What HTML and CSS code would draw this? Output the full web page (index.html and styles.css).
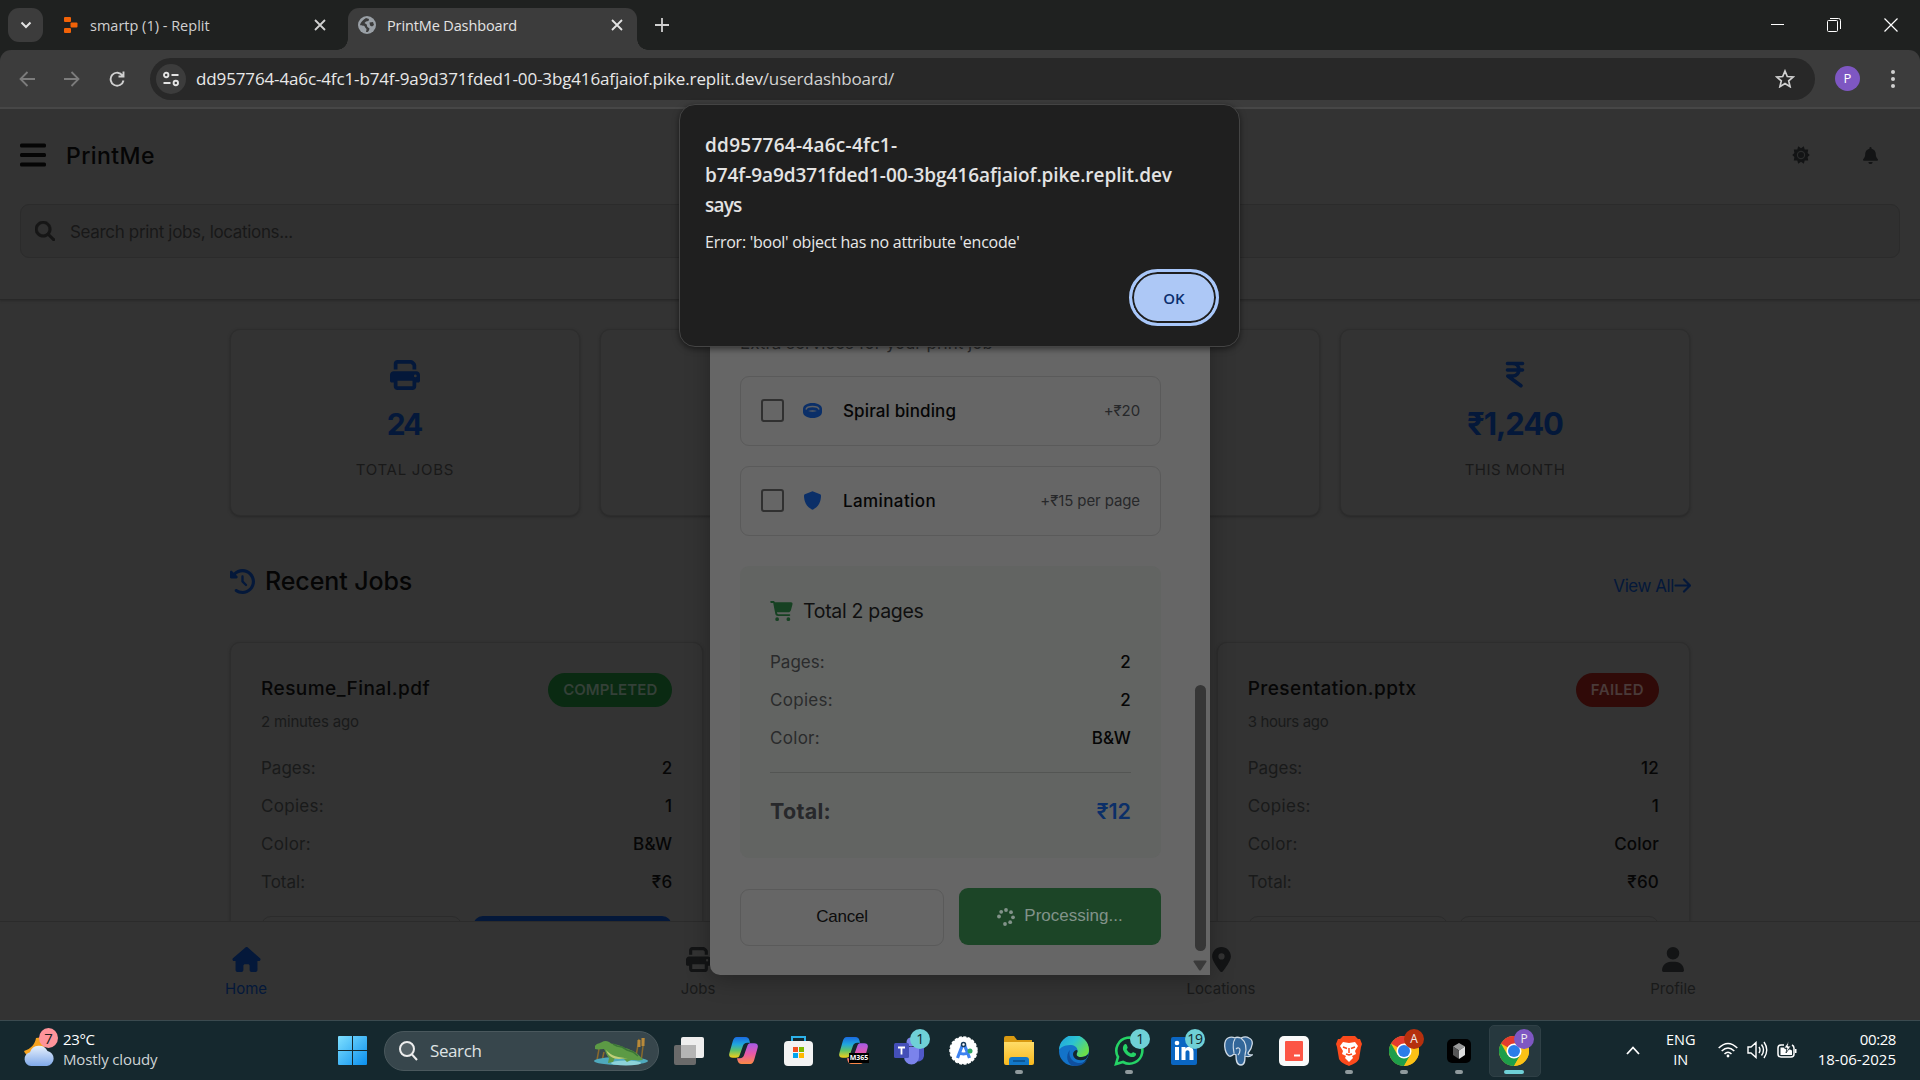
FILE: index.html
```html
<!DOCTYPE html>
<html lang="en">
<head>
<meta charset="utf-8">
<title>PrintMe Dashboard</title>
<link rel="stylesheet" href="styles.css">
</head>
<body>
<svg class="defs" width="0" height="0" aria-hidden="true">
  <defs>
    <symbol id="printer" viewBox="0 0 512 512"><path d="M128 0C92.7 0 64 28.7 64 64v96h64V64H354.7L384 93.3V160h64V93.3c0-17-6.7-33.3-18.7-45.3L400 18.7C388 6.7 371.7 0 354.7 0H128zM384 352v32 64H128V384 368 352H384zm64 32h32c17.7 0 32-14.3 32-32V256c0-35.3-28.7-64-64-64H64c-35.3 0-64 28.7-64 64v96c0 17.7 14.3 32 32 32H64v64c0 35.3 28.7 64 64 64H384c35.3 0 64-28.7 64-64V384zM432 248a24 24 0 1 1 0 48 24 24 0 1 1 0-48z"/></symbol>
    <symbol id="close" viewBox="0 0 12 12"><path d="M1 1L11 11M11 1L1 11" fill="none" stroke="currentColor" stroke-width="1.8"/></symbol>
    <symbol id="chrome" viewBox="0 0 30 30">
      <circle cx="15" cy="15" r="15" fill="#fbc116"/>
      <path d="M15 15L2 7.5A15 15 0 0 1 28 7.5H15z" fill="#e33b2e"/>
      <path d="M2 7.5A15 15 0 0 0 15 30L21.5 18.8L8.5 18.8z" fill="#1e9e4a"/>
      <path d="M28 7.500H15V15L21.500 18.800L15 30A15 15 0 0 0 28 7.500z" fill="#fbc116"/>
      <circle cx="15" cy="15" r="7.500" fill="#fff"/><circle cx="15" cy="15" r="6" fill="#2b7de9"/>
    </symbol>
    <linearGradient id="cpA" x1="0" y1="0" x2="0" y2="1"><stop offset="0" stop-color="#1b6be0"/><stop offset=".35" stop-color="#1fa5e0"/><stop offset=".65" stop-color="#5fc36a"/><stop offset="1" stop-color="#f5d018"/></linearGradient>
    <linearGradient id="cpB" x1="0" y1="0" x2="0" y2="1"><stop offset="0" stop-color="#a55be8"/><stop offset=".5" stop-color="#e858a8"/><stop offset="1" stop-color="#fb8a44"/></linearGradient>
    <symbol id="copilot" viewBox="0 0 30 28">
      <path d="M8 0h9c2.500 0 3.500 1.500 4 3l.8 3h-3c-2.500 0-3.800 1.300-4.500 3.500L11 19c-.7 2-1.800 2.500-4 2.500H4c-3.500 0-4.500-2-3.600-5L4 4C4.800 1.500 6 0 8 0z" fill="url(#cpA)"/>
      <path d="M22 28h-9c-2.500 0-3.500-1.500-4-3l-.8-3h3c2.500 0 3.800-1.300 4.500-3.500L19 9c.7-2 1.800-2.500 4-2.500h3c3.500 0 4.500 2 3.600 5L26 24c-.8 2.500-2 4-4 4z" fill="url(#cpB)"/>
    </symbol>
    <linearGradient id="win" x1="0" y1="0" x2="1" y2="1"><stop offset="0" stop-color="#7fe0ff"/><stop offset="1" stop-color="#0a8fee"/></linearGradient>
    <linearGradient id="cloud" x1="0" y1="0" x2="0" y2="1"><stop offset="0" stop-color="#e8f1fc"/><stop offset="1" stop-color="#7fa9ea"/></linearGradient>
    <linearGradient id="edge" x1="0" y1="0" x2="1" y2=".6"><stop offset="0" stop-color="#1f9fe0"/><stop offset=".5" stop-color="#2cc3d2"/><stop offset="1" stop-color="#6be04a"/></linearGradient>
    <linearGradient id="folder" x1="0" y1="0" x2="0" y2="1"><stop offset="0" stop-color="#ffdc68"/><stop offset="1" stop-color="#f9b91d"/></linearGradient>
  </defs>
</svg>

<div class="tabstrip">
  <button class="tab-search"><svg width="12" height="8" viewBox="0 0 12 8"><path d="M1.500 1.500L6 6l4.500-4.500" fill="none" stroke="#e3e3e3" stroke-width="2"/></svg></button>
  <div class="tab">
    <svg class="fav" width="14" height="16" viewBox="0 0 14 16" fill="#f26207"><rect width="7" height="5" rx="1"/><rect x="6.500" y="5.500" width="7" height="5" rx="1"/><rect y="11" width="7" height="5" rx="1"/></svg>
    <span>smartp (1) - Replit</span>
    <svg class="x" width="12" height="12"><use href="#close"/></svg>
  </div>
  <div class="tab active">
    <svg class="fav" width="18" height="18" viewBox="0 0 18 18"><circle cx="9" cy="9" r="9" fill="#9aa0a6"/><path d="M8 2C5 4 2.500 6 2 9c1.500 1 4.500 0 5 2 .3 1.500 1.500 1.200 1.500 2.500L8 16c3 .5 3-2 3.500-3.500l-2-1.500c-1-1 0-2.500-1.500-3L6.500 7 8 5.500 10.500 5 11 3z" fill="#3c3c3c"/><path d="M11.500 6.500L15 6l1 3-2 1.500-2-1z" fill="#3c3c3c"/></svg>
    <span>PrintMe Dashboard</span>
    <svg class="x" width="12" height="12"><use href="#close"/></svg>
  </div>
  <svg class="plus" width="14" height="14" viewBox="0 0 14 14"><path d="M7 0v14M0 7h14" stroke="#d0d0d0" stroke-width="1.800"/></svg>
  <div class="winctl">
    <svg width="13" height="14" viewBox="0 0 13 14"><path d="M0 6.500h13" stroke="#fff"/></svg>
    <svg width="14" height="14" viewBox="0 0 14 14" fill="none" stroke="#fff"><rect x=".5" y="2.500" width="10" height="11" rx="1"/><path d="M3 .5h8.500a2 2 0 0 1 2 2V11"/></svg>
    <svg width="14" height="14" viewBox="0 0 14 14"><path d="M.5.5l13 13m0-13l-13 13" stroke="#fff" stroke-width="1.200"/></svg>
  </div>
</div>

<div class="toolbar-wrap"><div class="toolbar">
  <svg width="16" height="16" viewBox="0 0 16 16" fill="none" stroke="#7c7c7c" stroke-width="1.800"><path d="M16 8H1.500M8.500 1L1.500 8l7 7"/></svg>
  <svg class="fwd" width="16" height="16" viewBox="0 0 16 16" fill="none" stroke="#7c7c7c" stroke-width="1.800"><path d="M0 8h14.500M7.500 1l7 7-7 7"/></svg>
  <svg class="reload" width="16" height="16" viewBox="0 0 16 16" fill="none" stroke="#d0d0d0" stroke-width="1.900"><path d="M13.500 4.500A6.500 6.500 0 1 0 14.500 9.500M14.500 .5V5.500H9.500"/></svg>
  <div class="omnibox">
    <span class="site"><svg width="16" height="16" viewBox="0 0 16 16" fill="none" stroke="#e3e3e3" stroke-width="1.900"><circle cx="3.200" cy="4" r="2.200"/><path d="M8.500 4H15.500M.5 12H7.500"/><circle cx="12.800" cy="12" r="2.200"/></svg></span>
    <span class="url">dd957764-4a6c-4fc1-b74f-9a9d371fded1-00-3bg416afjaiof.pike.replit.dev<span class="path">/userdashboard/</span></span>
    <svg class="star" width="20" height="19" viewBox="0 0 20 19"><path d="M10 2l2.300 5.500 5.900.5-4.500 3.900 1.400 5.800L10 14.600l-5.100 3.100 1.400-5.800L1.800 8l5.900-.5z" fill="none" stroke="#d0d0d0" stroke-width="1.700"/></svg>
  </div>
  <span class="avatar">P</span>
  <svg class="kebab" width="4" height="18" viewBox="0 0 4 18" fill="#d0d0d0"><circle cx="2" cy="2" r="2"/><circle cx="2" cy="9" r="2"/><circle cx="2" cy="16" r="2"/></svg>
</div></div>

<div class="page">
  <header class="head">
    <div class="head-row">
      <svg width="26" height="24" viewBox="0 0 26 24" fill="#050505"><rect y=".5" width="26" height="4" rx="1.500"/><rect y="10" width="26" height="4" rx="1.500"/><rect y="19.500" width="26" height="4" rx="1.500"/></svg>
      <h1>PrintMe</h1>
      <svg class="sun" width="18" height="18" viewBox="0 0 18 18"><path d="M9 2.200L11.800 .2l.9 3.300 3.500.1-.6 3.300L17.800 9l-2.200 2.100.6 3.300-3.500.1-.9 3.300L9 15.800l-2.800 2-.9-3.300-3.500-.1.600-3.300L.2 9l2.200-2.100-.6-3.300 3.500-.1.900-3.300z" fill="#131415"/><circle cx="9" cy="9" r="3.600" fill="none" stroke="#2b2c2c" stroke-width="1.200"/></svg>
      <svg class="bell" width="15" height="17" viewBox="0 0 448 512" fill="#131415"><path d="M224 0c-17.700 0-32 14.300-32 32V51.200C119 66 64 130.600 64 208v18.800c0 47-17.300 92.400-48.500 127.600l-7.400 8.300c-8.400 9.400-10.400 22.900-5.300 34.400S19.400 416 32 416H416c12.600 0 24-7.400 29.200-18.900s3.100-25-5.300-34.400l-7.400-8.300C401.300 319.200 384 273.900 384 226.800V208c0-77.400-55-142-128-156.800V32c0-17.700-14.300-32-32-32zm45.300 493.300c12-12 18.700-28.300 18.700-45.300H224 160c0 17 6.700 33.300 18.700 45.300s28.300 18.700 45.300 18.700s33.300-6.700 45.300-18.700z"/></svg>
    </div>
    <div class="search">
      <svg width="20" height="20" viewBox="0 0 512 512" fill="#161616"><path d="M416 208c0 45.900-14.900 88.300-40 122.700L502.600 457.400c12.500 12.500 12.500 32.800 0 45.300s-32.800 12.500-45.300 0L330.700 376c-34.400 25.200-76.800 40-122.700 40C93.100 416 0 322.900 0 208S93.100 0 208 0S416 93.100 416 208zM208 352a144 144 0 1 0 0-288 144 144 0 1 0 0 288z" stroke="#161616" stroke-width="14"/></svg>
      <span>Search print jobs, locations...</span>
    </div>
  </header>

  <main>
    <section class="stats">
      <div class="stat"><svg width="30" height="30"><use href="#printer"/></svg><b class="n24">24</b><small>TOTAL JOBS</small></div>
      <div class="stat"></div>
      <div class="stat"></div>
      <div class="stat"><svg width="30" height="30" viewBox="0 0 30 30" fill="none" stroke="#04183a" stroke-width="3.600" stroke-linecap="round" stroke-linejoin="round"><path d="M7.500 3.500h15M7.500 10h15M8 3.500h4.500c8.500 0 8.500 12.500 0 12.500H7.800L21 25.800"/></svg><b>₹1,240</b><small class="tm">THIS MONTH</small></div>
    </section>

    <div class="section-head">
      <svg width="25" height="25" viewBox="0 0 512 512" fill="#04183a"><path d="M75 75L41 41C25.900 25.900 0 36.600 0 57.900V168c0 13.300 10.700 24 24 24H134.100c21.400 0 32.100-25.900 17-41l-30.800-30.800C155 85.500 203 64 256 64c106 0 192 86 192 192s-86 192-192 192c-40.800 0-78.600-12.700-109.700-34.400c-14.500-10.100-34.400-6.600-44.600 7.900s-6.600 34.400 7.900 44.600C151.200 495 201.700 512 256 512c141.400 0 256-114.600 256-256S397.400 0 256 0C185.300 0 121.300 28.700 75 75zm181 53c-13.300 0-24 10.700-24 24V256c0 6.400 2.500 12.500 7 17l72 72c9.400 9.400 24.600 9.400 33.900 0s9.400-24.600 0-33.900l-65-65V152c0-13.300-10.700-24-24-24z"/></svg>
      <h2>Recent Jobs</h2>
      <a>View All</a>
      <svg class="arrow" width="17" height="15" viewBox="0 0 17 15" fill="none" stroke="#04183a" stroke-width="2.200" stroke-linecap="round" stroke-linejoin="round"><path d="M1.500 7.500h14M10 1.500l6 6-6 6"/></svg>
    </div>

    <section class="jobs">
      <article class="job">
        <div class="job-top"><h3>Resume_Final.pdf</h3><span class="badge ok">COMPLETED</span></div>
        <p class="ago">2 minutes ago</p>
        <div class="rows">
          <div><span>Pages:</span><b>2</b></div><div><span class="w">Copies:</span><b>1</b></div><div><span class="w">Color:</span><b>B&amp;W</b></div><div><span>Total:</span><b>₹6</b></div>
        </div>
        <div class="job-actions"><i></i><i class="blue"></i></div>
      </article>
      <article class="job"></article>
      <article class="job">
        <div class="job-top"><h3>Presentation.pptx</h3><span class="badge bad">FAILED</span></div>
        <p class="ago hrs">3 hours ago</p>
        <div class="rows">
          <div><span>Pages:</span><b>12</b></div><div><span class="w">Copies:</span><b>1</b></div><div><span class="w">Color:</span><b>Color</b></div><div><span>Total:</span><b>₹60</b></div>
        </div>
        <div class="job-actions"><i></i><i></i></div>
      </article>
    </section>
  </main>

  <nav class="bottom-nav">
    <a class="on"><svg width="29" height="25" viewBox="0 0 576 512"><path d="M575.800 255.500c0 18-15 32.100-32 32.100h-32l.7 160.200c0 2.700-.2 5.400-.5 8.100V472c0 22.100-17.900 40-40 40H456c-1.100 0-2.200 0-3.300-.1c-1.400 .1-2.800 .1-4.200 .1H416 392c-22.100 0-40-17.900-40-40V448 384c0-17.700-14.300-32-32-32H256c-17.700 0-32 14.300-32 32v64 24c0 22.100-17.900 40-40 40H160 128.100c-1.500 0-3-.1-4.500-.2c-1.200 .1-2.400 .2-3.600 .2H104c-22.100 0-40-17.900-40-40V360c0-.9 0-1.900 .1-2.800V287.600H32c-18 0-32-14-32-32.100c0-9 3-17 10-24L266.400 8c7-7 15-8 22-8s15 2 21 7L564.800 231.500c8 7 12 15 11 24z"/></svg><span>Home</span></a>
    <a><svg width="25" height="25"><use href="#printer"/></svg><span>Jobs</span></a>
    <a class="after-gap"><svg width="19" height="25" viewBox="0 0 384 512"><path d="M215.700 499.200C267 435 384 279.400 384 192C384 86 298 0 192 0S0 86 0 192c0 87.400 117 243 168.300 307.200c12.300 15.300 35.100 15.300 47.400 0zM192 128a64 64 0 1 1 0 128 64 64 0 1 1 0-128z"/></svg><span>Locations</span></a>
    <a><svg width="22" height="25" viewBox="0 0 448 512"><path d="M224 256A128 128 0 1 0 224 0a128 128 0 1 0 0 256zm-45.700 48C79.800 304 0 383.800 0 482.300C0 498.700 13.300 512 29.700 512H418.300c16.400 0 29.700-13.300 29.700-29.700C448 383.800 368.200 304 269.700 304H178.300z"/></svg><span>Profile</span></a>
  </nav>

  <div class="modal">
    <p class="sub">Extra services for your print job</p>
    <div class="option">
      <i class="check"></i>
      <svg width="19" height="15" viewBox="0 0 19 15"><path d="M0 6C0 2.500 4 0 9.500 0S19 2.500 19 6v3c0 3.500-4 6-9.500 6S0 12.500 0 9z" fill="#0b2f68"/><path d="M3 6.500C3.500 4.600 6 3.600 9.500 3.600s6 1 6.500 2.900" fill="none" stroke="#5d6064" stroke-width="1.500"/><path d="M5 8q4.500-1.500 9 0-4.500 1.500-9 0z" fill="#5d6064"/></svg>
      <span>Spiral binding</span><em>+₹20</em>
    </div>
    <div class="option">
      <i class="check"></i>
      <svg width="19" height="19" viewBox="0 0 19 19" fill="#0b2f68"><path d="M9.500.3l7.600 3c.6.300.9.700.9 1.300C18 11 15.500 16 9.500 18.700 3.500 16 1 11 1 4.600c0-.6.300-1 .9-1.300z"/></svg>
      <span class="lam">Lamination</span><em>+₹15 per page</em>
    </div>
    <div class="summary">
      <h4><svg width="23" height="20" viewBox="0 0 576 512" fill="#164122"><path d="M0 24C0 10.700 10.700 0 24 0H69.500c22 0 41.500 12.800 50.600 32h411c26.300 0 45.500 25 38.600 50.400l-41 152.300c-8.500 31.400-37 53.300-69.500 53.300H170.700l5.400 28.500c2.200 11.300 12.100 19.500 23.600 19.500H488c13.300 0 24 10.700 24 24s-10.700 24-24 24H199.700c-34.600 0-64.300-24.600-70.700-58.500L77.400 54.500c-.7-3.800-4-6.500-7.900-6.500H24C10.700 48 0 37.300 0 24zM128 464a48 48 0 1 1 96 0 48 48 0 1 1 -96 0zm336-48a48 48 0 1 1 0 96 48 48 0 1 1 0-96z"/></svg><span>Total 2 pages</span></h4>
      <div class="rows">
        <div><span>Pages:</span><b>2</b></div><div><span class="w">Copies:</span><b>2</b></div><div><span class="w">Color:</span><b>B&amp;W</b></div>
      </div>
      <div class="grand"><span>Total:</span><b>₹12</b></div>
    </div>
    <div class="actions">
      <button class="cancel">Cancel</button>
      <button class="go"><svg width="18" height="18" viewBox="0 0 18 18" fill="#82938a"><circle cx="9" cy="2" r="1.900"/><circle cx="14" cy="4.200" r="1.900"/><circle cx="16" cy="9.300" r="1.900"/><circle cx="13.200" cy="14.200" r="1.900"/><circle cx="8" cy="16" r="1.900"/><circle cx="2" cy="8.500" r="1.900"/><circle cx="4.200" cy="3.800" r="1.900"/></svg><span>Processing...</span></button>
    </div>
    <div class="scroll"><i></i><svg width="14" height="11" viewBox="0 0 14 11"><path d="M1.500.5h11c1 0 1.300.8.8 1.500L8 10c-.5.700-1.500.7-2 0L.7 2C.2 1.300.5.500 1.500.5z" fill="#3a3a3a"/></svg></div>
  </div>
</div>

<div class="dialog">
  <h5><span class="l1">dd957764-4a6c-4fc1-</span><br><span class="l2">b74f-9a9d371fded1-00-3bg416afjaiof.pike.replit.dev</span><br><span class="l3">says</span></h5>
  <p>Error: 'bool' object has no attribute 'encode'</p>
  <button>OK</button>
</div>

<footer class="taskbar">
  <div class="weather">
    <span class="wicon"><svg width="34" height="38" viewBox="0 0 34 38"><path d="M12 9c-1 6-5 11-12 13 3 8 14 9 20 4V8z" fill="#f5a21f"/><path d="M7 37a7 7 0 0 1-1-13.800A9.500 9.500 0 0 1 23.500 22 7.600 7.600 0 0 1 23 37z" fill="url(#cloud)"/></svg><i>7</i></span>
    <div><span class="deg">23°C</span><span class="cond">Mostly cloudy</span></div>
  </div>
  <svg class="start" width="29" height="29" viewBox="0 0 29 29" fill="url(#win)"><path d="M0 1q0-1 1-1h13v14H0zM15 0h13q1 0 1 1v13H15zM0 15h14v14H1q-1 0-1-1zM15 15h14v13q0 1-1 1H15z"/></svg>
  <div class="tsearch">
    <svg width="19" height="20" viewBox="0 0 19 20" fill="rgba(255,255,255,.15)" stroke="#eee" stroke-width="2"><circle cx="8" cy="8" r="7"/><path d="M13 13.500l5 5.500"/></svg>
    <span>Search</span>
    <svg class="gator" width="57" height="30" viewBox="0 0 57 30"><path d="M42 26L46 3M48 26l3-24M4 24L6 13M9 25l2-9" stroke="#8a6a2c" stroke-width="1.500"/><path d="M46 4v7M50 2v8" stroke="#b98a3a" stroke-width="3"/><ellipse cx="28" cy="25" rx="27" ry="4" fill="#4fa9bd"/><ellipse cx="33" cy="27" rx="15" ry="2.500" fill="#8dd3da"/><path d="M2 10c2-3 5-2.500 7-4 3-2 7-1 9 1.500 5 1 9 1.500 14 4.500 8 2 14 6 18 12-5 1-9 0-12 0l-4 2-3-3-9-1-2 4-5 1 1-5c-3-3-3-6-5-9-3 0-6 1-9 0z" fill="#5c9a45"/><path d="M13 14c5 6 13 8 22 8l-9 1c-6 0-11-3-13-9z" fill="#c2cf7a"/><path d="M20 8l4 2 5 1 5 3 6 2 5 4" stroke="#3b7537" stroke-width="1.500" fill="none"/></svg>
  </div>
  <div class="apps">
    <span><svg width="30" height="28" viewBox="0 0 30 28"><rect y="8" width="22" height="20" rx="2" fill="#6a6a6a"/><rect x="7" width="23" height="21" rx="2" fill="#eee"/><rect x="7" y="8" width="15" height="13" fill="#b4b4b4"/></svg></span>
    <span><svg width="29" height="27"><use href="#copilot"/></svg></span>
    <span><svg width="29" height="30" viewBox="0 0 29 30"><path d="M8 6V1h13v5" fill="none" stroke="#2cb2ea" stroke-width="2"/><rect y="5" width="29" height="25" rx="4" fill="#f3f3f3"/><path d="M9 11h5v5H9z" fill="#f25022"/><path d="M15 11h5v5h-5z" fill="#7fba00"/><path d="M9 17h5v5H9z" fill="#00a4ef"/><path d="M15 17h5v5h-5z" fill="#ffb900"/></svg></span>
    <span><svg width="29" height="27"><use href="#copilot"/></svg><i class="m365">M365</i></span>
    <span><svg width="30" height="28" viewBox="0 0 30 28"><circle cx="17" cy="5" r="4.500" fill="#7b83eb"/><path d="M20 9h10v10a6 6 0 0 1-8 5z" fill="#5059c9"/><path d="M10 10h15v10a7.500 7.500 0 0 1-15 0z" fill="#7b83eb"/><rect y="6" width="15" height="15" rx="1.500" fill="#444fb8"/><path d="M4 10.500h7M7.500 10.500v7" stroke="#fff" stroke-width="1.800"/></svg><i class="count">1</i></span>
    <span><svg width="29" height="29" viewBox="0 0 29 29"><circle cx="14.500" cy="14.500" r="13.500" fill="#fff" stroke="#fff" stroke-width="1.500" stroke-dasharray="3 1.500"/><path d="M13.500 9L8.500 22M15.500 9l5 13M9.500 16.500q5 3 10 0" fill="none" stroke="#3d82f0" stroke-width="3.200"/><circle cx="21" cy="15" r="2.500" fill="#2da562"/><circle cx="14.500" cy="8.500" r="2" fill="#fff" stroke="#173a5c" stroke-width="1.500"/></svg></span>
    <span class="run"><svg width="30" height="29" viewBox="0 0 30 29"><path d="M0 2q0-2 2-2h8l3 4h15v8H0z" fill="#d99a11"/><path d="M0 6h30v21q0 2-2 2H2q-2 0-2-2z" fill="url(#folder)"/><path d="M5 29v-5q0-3 3-3h14q3 0 3 3v5z" fill="#1278c8"/><path d="M9 25h12" stroke="#0b4c86" stroke-width="1.500"/></svg></span>
    <span><svg width="30" height="30" viewBox="0 0 30 30"><circle cx="15" cy="15" r="15" fill="#1373c9"/><path d="M0 14A15 15 0 0 1 30 14c0 5-4 7-8 7-4 0-5-2-4-4 2-5-2-8-7-8C5 9 1 12 0 14z" fill="url(#edge)"/><path d="M11 14c-2 5 1 12 8 13 4 .5 7-1 9-3-3 5-8 6-13 6C8 29 6 19 11 14z" fill="#0f4f9e"/><path d="M18 17c-1 2 0 4 4 4 3 0 6-1 7.600-3.500-.5 2.500-1.500 4-2.600 5.500-7 3-13 0-13-5 0-2 2-4 4-4 1 1 .5 2 0 3z" fill="#15272d"/></svg></span>
    <span class="run"><svg width="30" height="30" viewBox="0 0 30 30"><path d="M2 28l2-7a13 13 0 1 1 5 5z" fill="#15272d" stroke="#25d366" stroke-width="2.600"/><path d="M10 9c1-1.500 2.500-1 3 .5l.7 2c0 1-1 1.300-1 2 1 2 2.300 3 4.300 4 1 0 1.300-1.500 2.500-1.200l2.500 1.200c.5 3-3 4-5 3.500C13 20 10 16.500 9 13.500 8.800 11.500 9 10 10 9z" fill="#25d366"/></svg><i class="count">1</i></span>
    <span><svg width="26" height="29" viewBox="0 0 26 29"><rect y="1" width="26" height="28" rx="2" fill="#0a66c2"/><path d="M4 11h4v13H4zM10.500 11h4v1.700c1.200-3 8-3 8 3V24h-4v-7.500c0-3-4-3-4 0V24h-4z" fill="#fff"/><circle cx="6" cy="7" r="2.300" fill="#fff"/></svg><i class="count">19</i></span>
    <span><svg width="29" height="30" viewBox="0 0 29 30"><path d="M4 2C-1 5 0 16 5 20c2 1 4-1 5-2l2 1c0 4 0 10 5 10 4 0 4-5 4-9 3 1 6 0 7-1-3 0-4-1-4-2C29 11 30 4 25 2c-3-2-6-1-8 0-3-1-5-1-6 0C9 1 6 1 4 2z" fill="#33679a" stroke="#cfdbe6" stroke-width="1.300"/><path d="M11 3c-3 4-2 9-1 14M17 2c5 4 6 10 4 17M12 13c2-2 4-1 4 1s-1 4-2 5" fill="none" stroke="#cfdbe6" stroke-width="1.200"/></svg></span>
    <span><svg width="30" height="30" viewBox="0 0 30 30"><rect width="30" height="30" rx="5" fill="#fafafa"/><rect x="6" y="5" width="18" height="20" rx="1" fill="#fc5545"/><path d="M15 19.500h6" stroke="#fff" stroke-width="2"/></svg></span>
    <span class="run"><svg width="26" height="30" viewBox="0 0 26 30"><path d="M7 0h12l3 3 2 0 2 5-1 3-2 12c-2 4-6 5-10 7C9 28 5 27 3 23L1 11 0 8l2-5h2z" fill="#fb4a1c"/><path d="M7 6l6 1 6-1 3 4-3 5 1 3-4 2 1 2-4 4-4-4 1-2-4-2 1-3-3-5z" fill="#fff"/><path d="M7 11l4 1.500M19 11l-4 1.500M10 18l3 1 3-1M13 12v5" stroke="#fb4a1c" stroke-width="1.500"/></svg></span>
    <span class="run"><svg width="30" height="30"><use href="#chrome"/></svg><i class="who a">A</i></span>
    <span class="run"><svg width="24" height="24" viewBox="0 0 24 24"><rect width="24" height="24" rx="5" fill="#000"/><path d="M12 4l6 3.500-6 4-6-4z" fill="#999"/><path d="M6 7.500l6 4V20l-6-4z" fill="#555"/><path d="M18 7.500l-6 4V20l6-4z" fill="#ddd"/></svg></span>
    <span class="run cur"><svg width="30" height="30"><use href="#chrome"/></svg><i class="who p">P</i></span>
  </div>
  <div class="tray">
    <svg class="up" width="14" height="9" viewBox="0 0 14 9"><path d="M1 8l6-6.500L13 8" fill="none" stroke="#fff" stroke-width="1.800"/></svg>
    <div class="lang"><span>ENG</span><span class="in">IN</span></div>
    <svg class="wifi" width="20" height="16" viewBox="0 0 20 16" fill="none" stroke="#fff" stroke-width="1.500"><path d="M.7 6Q10-3 19.300 6M3.700 9q6.300-6 12.600 0M6.500 12q3.500-3.500 7 0"/><circle cx="10" cy="14" r="1.400" fill="#fff" stroke="none"/></svg>
    <svg class="vol" width="21" height="18" viewBox="0 0 21 18" fill="none" stroke="#fff" stroke-width="1.400"><path d="M1 6v6h3l5 4.500v-15L4 6zM12 6q2 3 0 6M14.500 3.500q4 5.500 0 11M17 1q5.500 8 0 16"/></svg>
    <svg class="bat" width="20" height="18" viewBox="0 0 20 18"><path d="M7 4H4Q1 4 1 7v6q0 3 3 3h10q3 0 3-3V7q0-2-2-3" fill="none" stroke="#fff" stroke-width="1.500"/><path d="M18 8v4h1.500V8z" fill="#fff"/><path d="M3.500 6.500H7l2 2 4 0 2 1v4.500H3.500z" fill="#fff"/><path d="M12 0L7 7h3l-1 5 5-7h-3z" fill="#fff" stroke="#15272d" stroke-width=".8"/></svg>
    <div class="clock"><span class="hm">00:28</span><span>18-06-2025</span></div>
  </div>
</footer>
</body>
</html>
```
FILE: styles.css
```css
* { box-sizing: border-box; }
body, h1, h2, h3, h4, h5, p { margin: 0; font-weight: inherit; }
body {
  width: 1920px; height: 1080px; overflow: hidden; position: relative;
  display: flex; flex-direction: column;
  background: #333; color: #e3e3e3;
  font-family: "Open Sans", "Noto Sans", sans-serif;
}
svg { display: block; flex: none; }
i, em { font-style: normal; }
button { border: 0; padding: 0; font: inherit; color: inherit; }
.defs { position: absolute; }

/* browser chrome */
.tabstrip { height: 50px; background: #1f2120; display: flex; align-items: center; flex: none; font-size: 14.5px; }
.tab-search { width: 35px; height: 34px; margin-left: 8px; border-radius: 11px; background: #3c3c3c; display: flex; align-items: center; justify-content: center; }
.tab { display: flex; align-items: center; width: 290px; height: 42px; margin-top: 8px; padding: 0 7px 8px 21px; color: #d0d0d0; }
.tab span { flex: 1; }
.tab .fav { margin-right: 12px; }
.tab.active { width: 289px; margin-left: 15px; padding: 0 14px 8px 10px; background: #3c3c3c; border-radius: 11px 11px 0 0; color: #e3e3e3; letter-spacing: -.13px; position: relative; }
.tab.active .fav { margin-right: 11px; }
.tab.active::before, .tab.active::after { content: ""; position: absolute; bottom: 0; width: 11px; height: 11px; }
.tab.active::before { left: -11px; background: radial-gradient(circle at 0 0, transparent 10.5px, #3c3c3c 11px); }
.tab.active::after { right: -11px; background: radial-gradient(circle at 100% 0, transparent 10.5px, #3c3c3c 11px); }
.plus { margin-left: 18px; }
.winctl { margin-left: auto; margin-right: 22px; display: flex; gap: 43px; align-items: center; }
.toolbar-wrap { background: #1f2120; flex: none; }
.toolbar { height: 59px; background: #3c3c3c; border-bottom: 2px solid #474747; border-radius: 11px 11px 0 0; display: flex; align-items: center; padding-left: 19px; }
.fwd { margin-left: 29px; }
.reload { margin-left: 29px; }
.omnibox { width: 1665px; height: 42px; margin-left: 25px; border-radius: 21px; background: #282828; display: flex; align-items: center; padding: 0 20px 0 6px; font-size: 17px; letter-spacing: -.13px; }
.site { width: 30px; height: 30px; border-radius: 50%; background: #3c3c3c; display: flex; align-items: center; justify-content: center; margin-right: 10px; }
.url { flex: 1; color: #e8e8e8; }
.path { color: #d2d2d2; }
.avatar { width: 25px; height: 25px; border-radius: 50%; background: #7e57c2; color: #fff; font-size: 13px; line-height: 25px; text-align: center; margin-left: 20px; }
.kebab { margin-left: 31px; }

/* dashboard */
.page { height: 911px; position: relative; overflow: hidden; flex: none; background: #333; font-family: Inter, "Noto Sans", sans-serif; color: #050505; }
.head { height: 191px; padding: 16px 20px 0; border-bottom: 1px solid #282828; box-shadow: 0 1px 2px #2a2a2a; }
.head-row { height: 60px; display: flex; align-items: center; }
.head h1 { font-size: 23px; line-height: 30px; padding-top: 1px; font-weight: 500; letter-spacing: .43px; margin-left: 20px; flex: 1; }
.sun { margin-right: 53px; }
.bell { margin-right: 22px; }
.search { margin-top: 19px; height: 54px; border: 1px solid #2b2b2b; border-radius: 9px; background: #303030; display: flex; align-items: center; padding-left: 14px; font-size: 17px; letter-spacing: -.34px; color: #181818; }
.search span { margin-left: 15px; padding-top: 1px; }
main { width: 1460px; margin: 29px auto 0; }
.stats { display: grid; grid-template-columns: repeat(4, 1fr); gap: 20px; }
.stat, .job { border: 1px solid #2d2d2d; border-radius: 10px; background: #333; box-shadow: 0 1px 3px #262626; }
.stat { height: 187px; padding-top: 30px; display: flex; flex-direction: column; align-items: center; color: #04183a; fill: #04183a; }
.stat b { font-size: 31px; line-height: 40px; margin-top: 14px; letter-spacing: -1.09px; }
.stat .n24 { font-size: 30px; letter-spacing: -2px; margin-right: 2px; }
.stat small { font-size: 15px; line-height: 20px; margin-top: 16px; letter-spacing: .72px; color: #191919; }
.stat .tm { letter-spacing: .48px; }
.section-head { height: 34px; margin: 48px 0 44px; display: flex; align-items: center; }
.section-head h2 { font-size: 25px; font-weight: 500; margin-left: 10px; letter-spacing: -.1px; flex: 1; }
.section-head a { font-size: 17px; letter-spacing: -.43px; color: #04183a; padding-top: 9px; }
.arrow { margin: 8px -1px 0 0; }
.jobs { display: grid; grid-template-columns: repeat(3, 1fr); gap: 20px; }
.job { height: 360px; padding: 30px 30px 0; }
.job-top { display: flex; justify-content: space-between; height: 31px; }
.job h3 { font-size: 19px; line-height: 31px; font-weight: 500; letter-spacing: .46px; color: #060606; }
.badge { height: 34px; border-radius: 17px; padding: 0 15px; line-height: 34px; font-size: 15px; font-weight: 600; letter-spacing: .08px; color: #344038; }
.ok { background: #0a2a12; }
.bad { background: #300a08; color: #4a3a39; letter-spacing: .38px; }
.ago { font-size: 15px; line-height: 20px; margin-top: 8px; letter-spacing: -.18px; color: #191a1a; }
.hrs { letter-spacing: -.36px; }
.rows { margin-top: 17px; font-size: 17px; line-height: 38px; color: #191a1a; }
.rows div { display: flex; justify-content: space-between; }
.rows b { font-weight: 500; color: #060606; letter-spacing: .2px; }
.rows .w { letter-spacing: .3px; }
.job-actions { display: flex; gap: 11px; margin-top: 15px; }
.job-actions i { flex: 1; height: 50px; border: 1px solid #2b2b2b; border-radius: 10px; }
.job-actions .blue { background: #04183a; border: 0; }

.bottom-nav { position: absolute; left: 0; right: 0; bottom: 0; height: 99px; border-top: 1px solid #2b2b2b; background: #333; padding-left: 20px; display: flex; color: #191a1a; fill: #131415; font-size: 15px; }
.bottom-nav a { width: 452px; padding-top: 25px; display: flex; flex-direction: column; align-items: center; gap: 7px; line-height: 20px; }
.bottom-nav .on { color: #04183a; fill: #04183a; }
.bottom-nav .after-gap { margin-left: 71px; }

.modal { position: absolute; left: 710px; top: 141px; width: 500px; height: 725px; border-radius: 10px 10px 0 10px; background: #666; box-shadow: 0 4px 24px rgba(0,0,0,.3); padding: 83px 49px 0 30px; }
.sub { font-size: 17px; line-height: 20px; color: #2c2d2e; }
.option { height: 70px; margin-bottom: 20px; border: 1px solid #5a5a5a; border-radius: 9px; display: flex; align-items: center; padding: 0 20px; }
.sub + .option { margin-top: 23px; }
.check { width: 23px; height: 23px; margin-bottom: 2px; border: 2px solid #303030; border-radius: 3px; }
.option svg { margin: 0 21px 2px 19px; }
.option span { flex: 1; font-size: 17px; font-weight: 500; letter-spacing: .13px; }
.option .lam { letter-spacing: .4px; }
.option em { font-size: 15px; letter-spacing: -.1px; margin-bottom: 2px; color: #27282a; }
.summary { height: 292px; margin-top: 30px; border-radius: 9px; background: #626462; padding: 30px 30px 0; }
.summary h4 { height: 30px; display: flex; align-items: center; font-size: 19.500px; letter-spacing: -.3px; color: #101010; }
.summary h4 span { margin-left: 10px; }
.summary .rows { color: #2a2b2c; }
.grand { display: flex; justify-content: space-between; border-top: 1px solid #535553; margin-top: 15px; padding-top: 18px; line-height: 40px; font-size: 21.500px; font-weight: 700; letter-spacing: .27px; color: #27282b; }
.grand b { font-weight: 600; color: #0b2f68; letter-spacing: 0; }
.actions { display: flex; gap: 15px; margin-top: 30px; font-family: "Liberation Sans", Arial, sans-serif; font-size: 17px; }
.actions button { flex: 1 1 0; min-width: 0; height: 57px; border-radius: 9px; }
.cancel { border: 1px solid #5a5a5a; background: none; margin-top: 1px; padding-bottom: 2px; color: #0c0c0c; letter-spacing: -.23px; }
.go { background: #1c4527; color: #82938a; display: flex; align-items: center; justify-content: center; gap: 9px; }
.go span { margin-top: -2px; }
.scroll { position: absolute; right: 3px; bottom: 4px; width: 14px; display: flex; flex-direction: column; align-items: center; gap: 9px; }
.scroll i { width: 11px; height: 266px; border-radius: 6px; background: #363636; }

/* alert dialog */
.dialog { position: absolute; left: 679px; top: 104px; width: 561px; height: 243px; border: 1px solid #444; border-radius: 16px; background: #1f1f1f; box-shadow: 0 2px 6px rgba(0,0,0,.5); padding: 25px 20px 0 25px; }
.dialog h5 { font-size: 19px; font-weight: 600; line-height: 30px; color: #e3e3e3; }
.l1 { letter-spacing: .26px; }
.l2 { letter-spacing: -.07px; }
.l3 { letter-spacing: -.8px; }
.dialog p { font-size: 16px; line-height: 24px; margin-top: 10px; letter-spacing: -.25px; color: #e8e8e8; }
.dialog button { display: block; width: 90px; height: 57px; margin: 15px 0 0 auto; border: 3px solid #a8c7fa; border-radius: 29px; background: #adc8f6; box-shadow: inset 0 0 0 2px #1f1f1f; color: #0b2f6e; font-size: 15px; font-weight: 600; }

/* taskbar */
.taskbar { height: 60px; flex: none; background: #15282e; border-top: 1px solid #3b4a4f; position: relative; display: flex; align-items: center; }
.taskbar svg, .taskbar span { flex: none; }
.weather { width: 313px; padding: 0 0 4px 24px; display: flex; align-items: center; font-size: 15px; }
.wicon { position: relative; width: 39px; height: 40px; }
.wicon i { position: absolute; left: 15px; top: -1px; width: 19px; height: 20px; border-radius: 50%; background: #ff949a; color: #222; text-align: center; line-height: 20px; }
.weather div span, .lang span, .clock span { display: block; line-height: 20px; }
.deg { letter-spacing: -.36px; color: #fff; }
.cond { letter-spacing: -.13px; color: #cfd4d6; }
.start { margin: 0 17px 0 25px; }
.tsearch { width: 275px; height: 40px; border-radius: 20px; border: 1px solid #4a585d; background: #37464c; display: flex; align-items: center; padding: 0 8px 0 14px; font-size: 17px; letter-spacing: -.4px; color: #dfe3e4; }
.tsearch span { margin-left: 12px; flex: 1; padding-bottom: 1px; }
.apps { display: flex; margin-left: 2px; height: 59px; }
.apps span { width: 55px; position: relative; display: flex; align-items: center; justify-content: center; }
.apps i { position: absolute; font-size: 13px; }
.apps .m365 { left: 23px; top: 32px; width: 20px; height: 10px; background: #000; color: #fff; font: 700 7px/10px "Open Sans", sans-serif; text-align: center; }
.apps .count { right: 6px; top: 8px; width: 20px; height: 20px; border-radius: 10px; background: #6fd0d6; color: #12262b; text-align: center; line-height: 20px; font-size: 14px; letter-spacing: -.3px; }
.apps .who { right: 7px; top: 8px; width: 20px; height: 20px; border-radius: 50%; color: #eee; text-align: center; line-height: 20px; font-size: 12px; }
.a { background: #b5300e; }
.p { background: #7e57c2; }
.run::after { content: ""; position: absolute; left: 24px; bottom: 6px; width: 8px; height: 4px; border-radius: 2px; background: #8f9a9d; }
.cur::before { content: ""; position: absolute; left: 3px; top: 4px; width: 50px; height: 50px; border-radius: 5px; background: #26383e; border: 1px solid #2f4046; }
.cur svg { position: relative; }
.run.cur::after { left: 18px; width: 20px; background: #6fd0d6; }
.tray { margin-left: auto; display: flex; align-items: center; font-size: 15px; color: #fff; padding-bottom: 1px; }
.lang { width: 30px; margin-left: 26px; text-align: center; font-size: 14.500px; padding-bottom: 1px; }
.wifi { margin-left: 22px; }
.vol { margin-left: 9px; }
.bat { margin-left: 9px; }
.clock { margin: 0 24px 0 21px; padding-bottom: 3px; text-align: right; }
.hm { letter-spacing: -.42px; }
```
